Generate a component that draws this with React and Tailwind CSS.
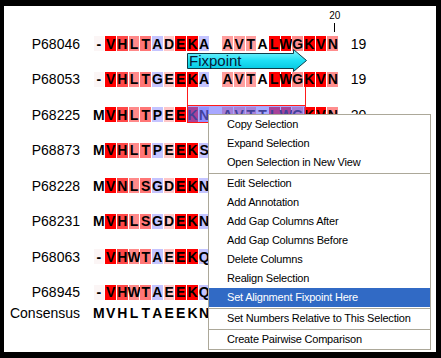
import React from 'react';

// conservation shade per alignment column
const shade = {
  R: 'bg-[#ff0000]',
  H: 'bg-[#ff4848]',
  L: 'bg-[#ff8a8a]',
  T: 'bg-[#ff7676]',
  B: 'bg-[#c4c4ff]',
  P: 'bg-[#ffc6c6]',
  S: 'bg-[#ff9e9e]',
  G: 'bg-[#ff8e8e]',
  '.': '',
};
const columns = '.RHLTBPRRB.SSS.RRGRRG';

// rows below the menu only show their first ten columns
const rows = [
  { name: 'P68046', seq: '-VHLTADEKA AVTALWGKVN', len: 19 },
  { name: 'P68053', seq: '-VHLTGEEKA AVTALWGKVN', len: 19 },
  { name: 'P68225', seq: 'MVHLTPEEKN AVTTLWGKVN', len: 20 },
  { name: 'P68873', seq: 'MVHLTPEEKS' },
  { name: 'P68228', seq: 'MVNLSGDEKN' },
  { name: 'P68231', seq: 'MVHLSGDEKN' },
  { name: 'P68063', seq: '-VHWTAEEKQ' },
  { name: 'P68945', seq: '-VHWTAEEKQ' },
];

const menu = [
  'Copy Selection',
  'Expand Selection',
  'Open Selection in New View',
  null,
  'Edit Selection',
  'Add Annotation',
  'Add Gap Columns After',
  'Add Gap Columns Before',
  'Delete Columns',
  'Realign Selection',
  'Set Alignment Fixpoint Here',
  null,
  'Set Numbers Relative to This Selection',
  null,
  'Create Pairwise Comparison',
];

function Cell({ ch, col, plain }) {
  let bg = '';
  if (!plain) bg = ch === '-' ? 'bg-[#fbf5f5]' : shade[columns[col]];
  return (
    <div
      className={`w-[11.7px] h-[15px] shrink-0 flex items-center justify-center border-r border-white font-bold text-[14px] leading-none text-black ${bg}`}
    >
      {ch === ' ' ? '' : ch}
    </div>
  );
}

function Row({ name, seq, len, plain }) {
  return (
    <div className="flex items-center h-[15px]">
      <div className="w-[76px] shrink-0 text-right text-[14px] leading-none text-black whitespace-nowrap">
        {name}
      </div>
      <div className="w-[13.6px] shrink-0" />
      {seq.split('').map((ch, i) => (
        <Cell key={i} ch={ch} col={i} plain={plain} />
      ))}
      {len && (
        <>
          <div className="w-[11.7px] shrink-0" />
          <div className="text-[14px] leading-none text-black">{len}</div>
        </>
      )}
    </div>
  );
}

export default function App() {
  return (
    <div className="w-[441px] h-[358px] bg-black pl-[4px] pt-[6px] font-['Liberation_Sans',Arial,sans-serif]">
      <div className="relative w-[432px] h-[346px] bg-white overflow-hidden">
        {/* ruler */}
        <div className="flex h-[30px]">
          <div className="w-[325px] shrink-0" />
          <div className="w-[11.7px] flex flex-col items-center pt-[5px]">
            <div className="text-[10px] leading-[10px] text-black">20</div>
            <div className="mt-[2px] w-px h-[9px] bg-black" />
          </div>
        </div>

        <div className="flex flex-col gap-[20.5px]">
          {rows.map((r) => (
            <Row key={r.name} {...r} />
          ))}
        </div>
        <div className="mt-[5.7px]">
          <Row name="Consensus" seq="MVHLTAEEKN" plain />
        </div>

        {/* Fixpoint annotation */}
        <svg className="absolute left-[183px] top-[43px]" width="121" height="24" viewBox="0 0 121 24">
          <defs>
            <linearGradient id="fx" x1="0" y1="0" x2="0" y2="1">
              <stop offset="0" stopColor="#8ff6ff" />
              <stop offset="0.5" stopColor="#1fe0f5" />
              <stop offset="1" stopColor="#00c4dc" />
            </linearGradient>
          </defs>
          <polygon
            points="0.5,4.5 106.5,4.5 106.5,0.5 119.5,11.5 106.5,22.5 106.5,19.5 0.5,19.5"
            fill="url(#fx)"
            stroke="#0e3c48"
            strokeWidth="1"
          />
        </svg>
        <div className="absolute left-[185px] top-[47px] text-[15px] leading-none text-[#06203a]">Fixpoint</div>

        {/* selection */}
        <div className="absolute left-[183px] top-[80px] w-[119px] h-[37px] border-x border-[#ff1a1a]" />
        <div className="absolute left-[183px] top-[99px] w-[119px] h-[18px] border border-[#ff1a1a] bg-[rgba(110,110,255,0.6)]" />

        {/* context menu */}
        <div className="absolute left-[204px] top-[108px] w-[223px] border border-[#aca899] bg-white text-[11px] tracking-[-0.2px] text-black">
          {menu.map((item, i) =>
            item === null ? (
              <div key={i} className="h-[2px] border-b border-[#aca899]" />
            ) : (
              <div
                key={i}
                className={`h-[19px] flex items-center pl-[18px] whitespace-nowrap ${
                  item === 'Set Alignment Fixpoint Here' ? 'bg-[#316ac5] text-white' : ''
                }`}
              >
                {item}
              </div>
            )
          )}
        </div>
      </div>
    </div>
  );
}
